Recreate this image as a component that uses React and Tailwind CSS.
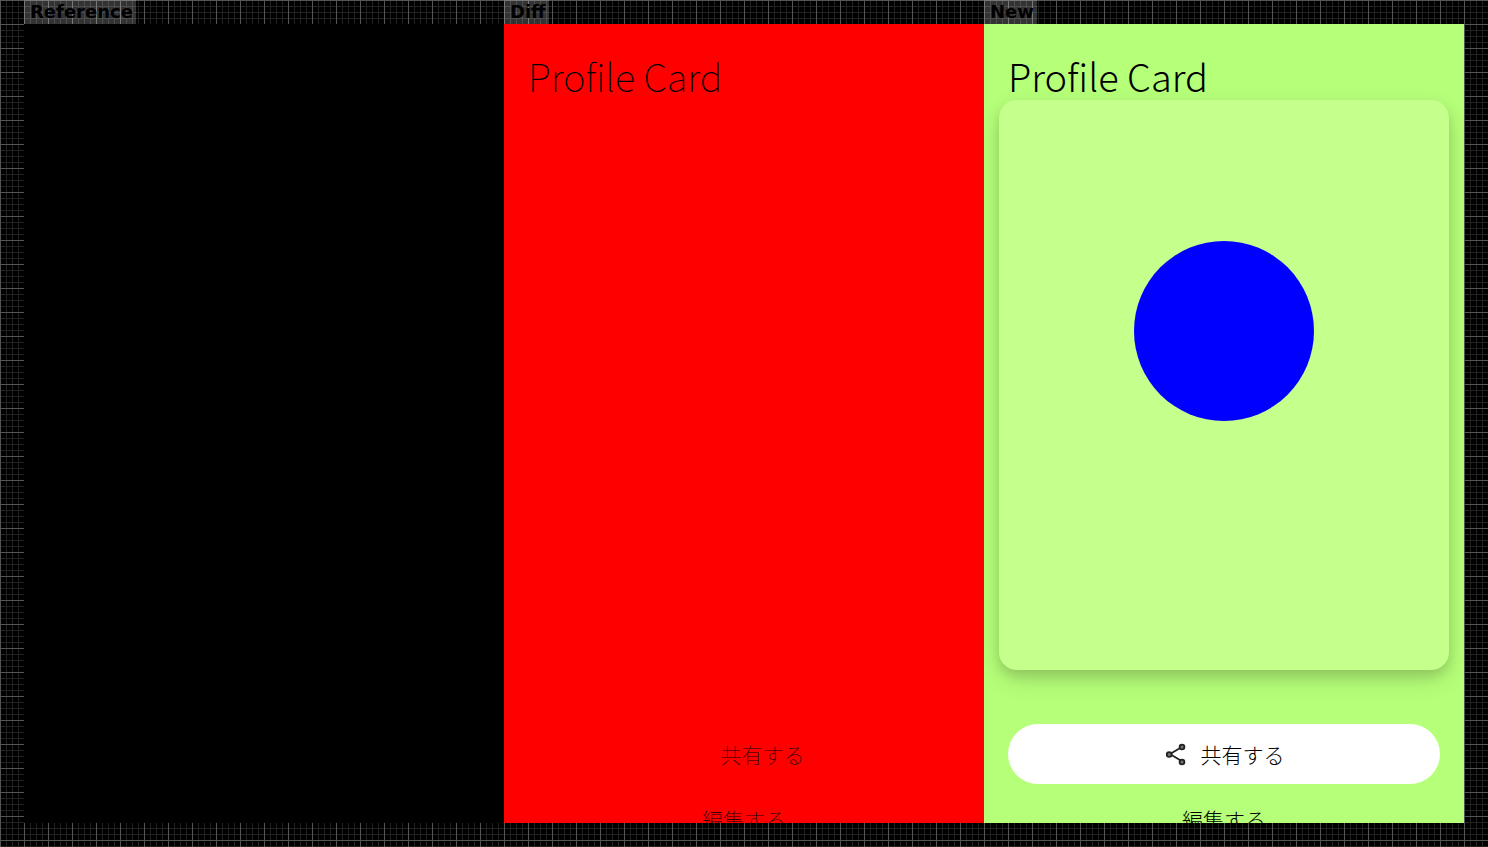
function ShareIcon({ className }) {
  return (
    <svg viewBox="0 0 24 24" className={className} fill="none" stroke="currentColor" aria-hidden="true">
      <path d="M17.5 5.2 6 12l11.5 7" strokeWidth="1.8" />
      <circle cx="18" cy="5" r="2.4" fill="#777" strokeWidth="1.8" />
      <circle cx="5.2" cy="12.5" r="2.4" fill="#777" strokeWidth="1.8" />
      <circle cx="18" cy="20" r="2.4" fill="#777" strokeWidth="1.8" />
    </svg>
  );
}

function ProfileScreen({ diff = false }) {
  return (
    <div
      className={`flex h-full flex-col text-black ${
        diff ? "bg-[#ff0000] font-thin" : "bg-[#b6ff79] font-light"
      }`}
    >
      <h2 className="shrink-0 px-6 pt-7 text-[38px] leading-12">Profile Card</h2>
      <div
        className={`mx-[15px] flex h-[570px] shrink-0 justify-center rounded-[18px] pt-[141px] ${
          diff ? "" : "bg-[#c5ff8c] shadow-[0_6px_12px_rgba(0,0,0,0.13),0_10px_24px_rgba(0,0,0,0.12)]"
        }`}
      >
        {!diff && <div className="size-[180px] rounded-full bg-[#0000ff]" />}
      </div>
      <button
        type="button"
        className={`mx-6 mt-[54px] flex h-[60px] shrink-0 items-center justify-center gap-[13px] rounded-full text-[21px] leading-8 ${
          diff ? "" : "bg-white"
        }`}
      >
        <ShareIcon className={diff ? "invisible size-6" : "size-6 text-[#222]"} />
        共有する
      </button>
      <button type="button" className="mx-6 mt-5 shrink-0 text-[21px] leading-[30px]">
        編集する
      </button>
    </div>
  );
}

function Column({ label, children }) {
  return (
    <section className="flex min-w-0 flex-1 flex-col">
      <h1 className="h-6 w-fit shrink-0 bg-white/20 pr-[3px] pl-[6px] font-['DejaVu_Sans',sans-serif] text-[18px] leading-6 font-bold text-black">
        {label}
      </h1>
      <div className="min-h-0 flex-1 overflow-hidden">{children}</div>
    </section>
  );
}

export default function App() {
  return (
    <main className="flex h-screen bg-black bg-[linear-gradient(to_right,#555_1px,transparent_1px),linear-gradient(to_bottom,#555_1px,transparent_1px),linear-gradient(to_right,#222_1px,transparent_1px),linear-gradient(to_bottom,#222_1px,transparent_1px)] bg-[size:24px_24px,24px_24px,6px_6px,6px_6px] px-6 pb-6 font-['Noto_Sans_CJK_JP',sans-serif]">
      <Column label="Reference">
        <div className="h-full bg-black" />
      </Column>
      <Column label="Diff">
        <ProfileScreen diff />
      </Column>
      <Column label="New">
        <ProfileScreen />
      </Column>
    </main>
  );
}
